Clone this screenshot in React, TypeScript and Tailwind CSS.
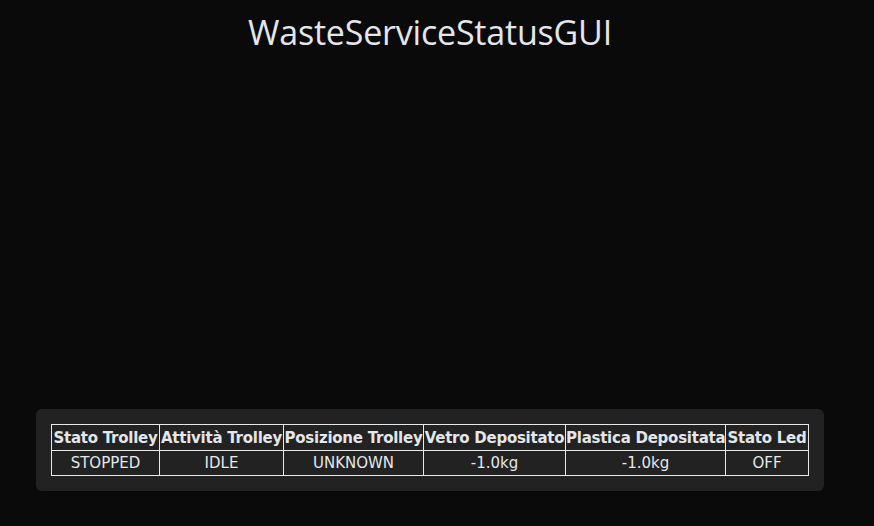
import React from "react";

const headers = [
  "Stato Trolley",
  "Attività Trolley",
  "Posizione Trolley",
  "Vetro Depositato",
  "Plastica Depositata",
  "Stato Led",
];
const values = ["STOPPED", "IDLE", "UNKNOWN", "-1.0kg", "-1.0kg", "OFF"];
const widths = [108, 124, 140, 142, 160, 83];

export default function App() {
  return (
    <div className="w-[874px] h-[526px] bg-[#0a0a0a] overflow-hidden">
      <div className="w-[860px]">
        <h1
          className="text-center text-[34px] leading-[44px] pt-[10px] text-[#e4e6ea] font-normal tracking-[-0.2px]"
          style={{ fontFamily: '"Segoe UI", "Open Sans", "Noto Sans", sans-serif' }}
        >
          WasteServiceStatusGUI
        </h1>
        <div className="h-[355px]" />
        <div className="mx-[36px] bg-[#222222] rounded-[6px] p-[15px]">
          <table
            className="table-fixed border-collapse w-full text-[#e4e6ea]"
            style={{ fontFamily: '"DejaVu Sans", Verdana, sans-serif' }}
          >
            <colgroup>
              {widths.map((w, i) => (
                <col key={i} style={{ width: w }} />
              ))}
            </colgroup>
            <thead>
              <tr className="h-[26px]">
                {headers.map((h) => (
                  <th
                    key={h}
                    className="border border-[#e8e8e8] p-0 text-[15px] leading-[18px] font-bold whitespace-nowrap text-center tracking-[-0.25px]"
                  >
                    {h}
                  </th>
                ))}
              </tr>
            </thead>
            <tbody>
              <tr className="h-[25px]">
                {values.map((v, i) => (
                  <td
                    key={i}
                    className="border border-[#e8e8e8] p-0 text-[15px] leading-[18px] text-center whitespace-nowrap"
                  >
                    {v}
                  </td>
                ))}
              </tr>
            </tbody>
          </table>
        </div>
      </div>
    </div>
  );
}
